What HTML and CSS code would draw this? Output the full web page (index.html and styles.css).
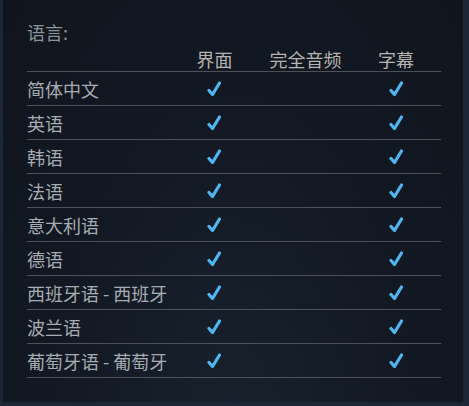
FILE: index.html
```html
<!DOCTYPE html>
<html lang="zh-CN">
<head>
<meta charset="utf-8">
<link rel="stylesheet" href="styles.css">
</head>
<body>
<div class="panel">
  <div class="title">语言:</div>
  <div class="table">
    <div class="row head">
      <div class="cell label"></div>
      <div class="cell">界面</div>
      <div class="cell">完全音频</div>
      <div class="cell">字幕</div>
    </div>
    <div class="row"><div class="cell label">简体中文</div><div class="cell"><svg class="chk" viewBox="0 0 14 16"><path d="M2 9.5 L5.5 13.5 L12.5 2"/></svg></div><div class="cell"></div><div class="cell"><svg class="chk" viewBox="0 0 14 16"><path d="M2 9.5 L5.5 13.5 L12.5 2"/></svg></div></div>
    <div class="row"><div class="cell label">英语</div><div class="cell"><svg class="chk" viewBox="0 0 14 16"><path d="M2 9.5 L5.5 13.5 L12.5 2"/></svg></div><div class="cell"></div><div class="cell"><svg class="chk" viewBox="0 0 14 16"><path d="M2 9.5 L5.5 13.5 L12.5 2"/></svg></div></div>
    <div class="row"><div class="cell label">韩语</div><div class="cell"><svg class="chk" viewBox="0 0 14 16"><path d="M2 9.5 L5.5 13.5 L12.5 2"/></svg></div><div class="cell"></div><div class="cell"><svg class="chk" viewBox="0 0 14 16"><path d="M2 9.5 L5.5 13.5 L12.5 2"/></svg></div></div>
    <div class="row"><div class="cell label">法语</div><div class="cell"><svg class="chk" viewBox="0 0 14 16"><path d="M2 9.5 L5.5 13.5 L12.5 2"/></svg></div><div class="cell"></div><div class="cell"><svg class="chk" viewBox="0 0 14 16"><path d="M2 9.5 L5.5 13.5 L12.5 2"/></svg></div></div>
    <div class="row"><div class="cell label">意大利语</div><div class="cell"><svg class="chk" viewBox="0 0 14 16"><path d="M2 9.5 L5.5 13.5 L12.5 2"/></svg></div><div class="cell"></div><div class="cell"><svg class="chk" viewBox="0 0 14 16"><path d="M2 9.5 L5.5 13.5 L12.5 2"/></svg></div></div>
    <div class="row"><div class="cell label">德语</div><div class="cell"><svg class="chk" viewBox="0 0 14 16"><path d="M2 9.5 L5.5 13.5 L12.5 2"/></svg></div><div class="cell"></div><div class="cell"><svg class="chk" viewBox="0 0 14 16"><path d="M2 9.5 L5.5 13.5 L12.5 2"/></svg></div></div>
    <div class="row"><div class="cell label">西班牙语 - 西班牙</div><div class="cell"><svg class="chk" viewBox="0 0 14 16"><path d="M2 9.5 L5.5 13.5 L12.5 2"/></svg></div><div class="cell"></div><div class="cell"><svg class="chk" viewBox="0 0 14 16"><path d="M2 9.5 L5.5 13.5 L12.5 2"/></svg></div></div>
    <div class="row"><div class="cell label">波兰语</div><div class="cell"><svg class="chk" viewBox="0 0 14 16"><path d="M2 9.5 L5.5 13.5 L12.5 2"/></svg></div><div class="cell"></div><div class="cell"><svg class="chk" viewBox="0 0 14 16"><path d="M2 9.5 L5.5 13.5 L12.5 2"/></svg></div></div>
    <div class="row"><div class="cell label">葡萄牙语 - 葡萄牙</div><div class="cell"><svg class="chk" viewBox="0 0 14 16"><path d="M2 9.5 L5.5 13.5 L12.5 2"/></svg></div><div class="cell"></div><div class="cell"><svg class="chk" viewBox="0 0 14 16"><path d="M2 9.5 L5.5 13.5 L12.5 2"/></svg></div></div>
  </div>
</div>
</body>
</html>
```

FILE: styles.css
```css
html, body {
  margin: 0;
  padding: 0;
}
body {
  width: 469px;
  height: 406px;
  background: #1b2636;
  font-family: "Noto Sans CJK SC", "Noto Sans", sans-serif;
  overflow: hidden;
}
.panel {
  box-sizing: border-box;
  margin: 0 6px 0 3px;
  height: 402px;
  padding: 21px 0 0 24px;
  background: radial-gradient(ellipse at 50% 110%, #18212d 0%, #121822 60%, #10151d 100%);
}
.title {
  font-size: 18px;
  line-height: 22px;
  height: 22px;
  color: #8a929a;
}
.table {
  width: 414px;
}
.row {
  display: grid;
  grid-template-columns: 142px 91px 91px 90px;
  height: 33px;
  border-bottom: 1px solid #4d5157;
  align-items: center;
}
.row.head {
  height: 27px;
  align-items: end;
  padding-bottom: 1px;
}
.cell {
  font-size: 18px;
  font-weight: 400;
  line-height: 22px;
  color: #a6acb1;
  text-align: center;
  display: flex;
  justify-content: center;
  align-items: center;
}
.head .cell {
  color: #b6b4b0;
}
.cell.label {
  justify-content: flex-start;
  text-align: left;
}
.chk {
  width: 14px;
  height: 16px;
  margin-left: -1px;
}
.chk path {
  fill: none;
  stroke: #4fb6f2;
  stroke-width: 3.2;
  stroke-linecap: round;
  stroke-linejoin: round;
}
```
